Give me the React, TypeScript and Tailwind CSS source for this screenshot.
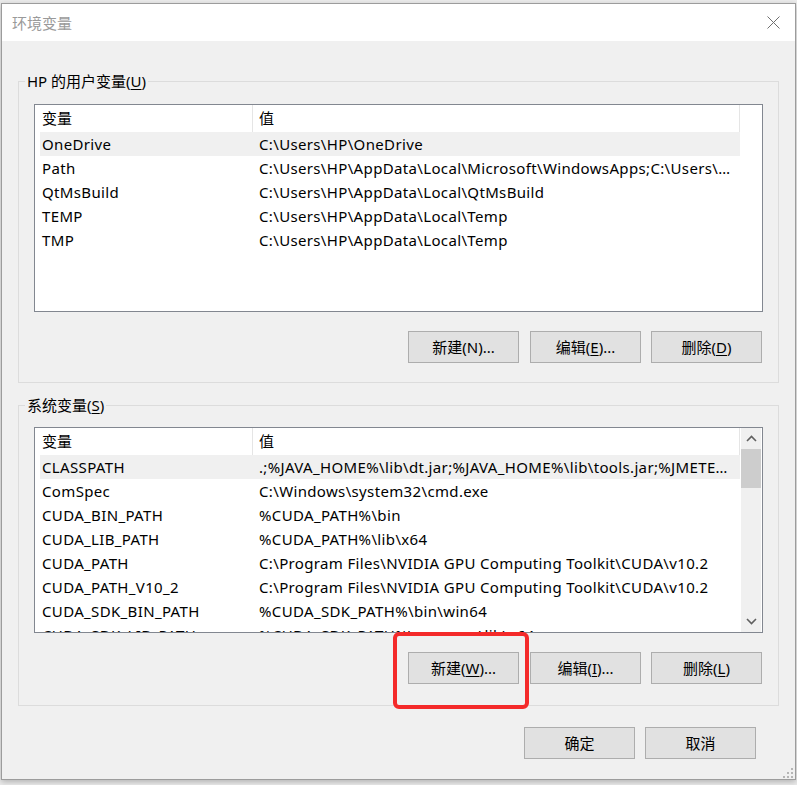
import React from "react";

const FONT = "font-['Noto_Sans','Noto_Sans_CJK_SC',sans-serif]";

type Row = { name: string; value: string; selected?: boolean };

const userRows: Row[] = [
  { name: "OneDrive", value: "C:\\Users\\HP\\OneDrive", selected: true },
  {
    name: "Path",
    value:
      "C:\\Users\\HP\\AppData\\Local\\Microsoft\\WindowsApps;C:\\Users\\HP\\AppData\\Local\\Programs\\Microsoft VS Code\\bin",
  },
  { name: "QtMsBuild", value: "C:\\Users\\HP\\AppData\\Local\\QtMsBuild" },
  { name: "TEMP", value: "C:\\Users\\HP\\AppData\\Local\\Temp" },
  { name: "TMP", value: "C:\\Users\\HP\\AppData\\Local\\Temp" },
];

const sysRows: Row[] = [
  {
    name: "CLASSPATH",
    value:
      ".;%JAVA_HOME%\\lib\\dt.jar;%JAVA_HOME%\\lib\\tools.jar;%JMETER_HOME%\\lib\\ext\\ApacheJMeter_core.jar;",
    selected: true,
  },
  { name: "ComSpec", value: "C:\\Windows\\system32\\cmd.exe" },
  { name: "CUDA_BIN_PATH", value: "%CUDA_PATH%\\bin" },
  { name: "CUDA_LIB_PATH", value: "%CUDA_PATH%\\lib\\x64" },
  { name: "CUDA_PATH", value: "C:\\Program Files\\NVIDIA GPU Computing Toolkit\\CUDA\\v10.2" },
  { name: "CUDA_PATH_V10_2", value: "C:\\Program Files\\NVIDIA GPU Computing Toolkit\\CUDA\\v10.2" },
  { name: "CUDA_SDK_BIN_PATH", value: "%CUDA_SDK_PATH%\\bin\\win64" },
  { name: "CUDA_SDK_LIB_PATH", value: "%CUDA_SDK_PATH%\\common\\lib\\x64" },
];

function Header() {
  return (
    <div className="flex h-[27px] w-[705px] shrink-0 text-[15px] leading-[27px] text-black">
      <div className="w-[218px] border-r border-[#e5e5e5] pl-[7px]">变量</div>
      <div className="w-[487px] border-r border-[#e5e5e5] pl-[6px]">值</div>
    </div>
  );
}

function Rows({ rows }: { rows: Row[] }) {
  return (
    <div className="flex flex-col">
      {rows.map((r) => (
        <div
          key={r.name}
          className={
            "ml-[5px] flex h-[24px] w-[700px] shrink-0 text-[15px] leading-[24px] tracking-[0.35px] text-black " +
            (r.selected ? "bg-[#f0f0f0]" : "")
          }
        >
          <div className="w-[213px] shrink-0 truncate pl-[2px]">{r.name}</div>
          <div className="w-[487px] shrink-0 truncate pl-[6px] pr-[6px]">{r.value}</div>
        </div>
      ))}
    </div>
  );
}

function Btn({ children, className = "" }: { children: React.ReactNode; className?: string }) {
  return (
    <button
      className={
        "flex h-[32px] w-[111px] items-center justify-center border border-[#adadad] bg-[#e1e1e1] text-[15px] text-black " +
        className
      }
    >
      {children}
    </button>
  );
}

function U({ children }: { children: React.ReactNode }) {
  return <span className="underline underline-offset-[2px]">{children}</span>;
}

function Chevron({ up }: { up?: boolean }) {
  return (
    <svg width="11" height="7" viewBox="0 0 11 7">
      <path
        d={up ? "M1 6 L5.5 1.5 L10 6" : "M1 1 L5.5 5.5 L10 1"}
        fill="none"
        stroke="#606060"
        strokeWidth="1.6"
      />
    </svg>
  );
}

export default function App() {
  return (
    <div className={"relative h-[785px] w-[797px] overflow-hidden bg-[#ececec] " + FONT}>
      <div className="relative ml-[1px] mt-[3px] flex h-[777px] w-[795px] flex-col border border-[#9c9c9c] bg-[#f0f0f0] shadow-[0_2px_6px_rgba(0,0,0,0.25)]">
        {/* title bar */}
        <div className="flex h-[37px] shrink-0 items-center justify-between bg-white pl-[10px] pr-[15px]">
          <span className="text-[15px] leading-[20px] text-[#9a9a9a]">环境变量</span>
          <svg width="13" height="13" viewBox="0 0 13 13">
            <path d="M0.5 0.5 L12.5 12.5 M12.5 0.5 L0.5 12.5" stroke="#6f6f6f" strokeWidth="1" />
          </svg>
        </div>

        {/* user variables */}
        <fieldset className="ml-[16px] mt-[30px] w-[761px] border border-[#dcdcdc]">
          <legend className="ml-[6px] px-[2px] text-[15px] leading-[20px] text-black">
            HP 的用户变量(<U>U</U>)
          </legend>
          <div className="mx-[15px] pt-[13px] pb-[19px]">
            <div className="h-[208px] overflow-hidden border border-[#828790] bg-white">
              <Header />
              <Rows rows={userRows} />
            </div>
            <div className="mt-[19px] flex justify-end pr-[1px]">
              <Btn>新建(N)...</Btn>
              <Btn className="ml-[11px]">
                编辑(<U>E</U>)...
              </Btn>
              <Btn className="ml-[10px]">
                删除(<U>D</U>)
              </Btn>
            </div>
          </div>
        </fieldset>

        {/* system variables */}
        <fieldset className="ml-[16px] mt-[12px] w-[761px] border border-[#dcdcdc]">
          <legend className="ml-[6px] px-[2px] text-[15px] leading-[20px] text-black">
            系统变量(<U>S</U>)
          </legend>
          <div className="mx-[15px] pt-[12px] pb-[21px]">
            <div className="flex h-[206px] overflow-hidden border border-[#828790] bg-white">
              <div className="flex w-[706px] flex-col overflow-hidden">
                <Header />
                <Rows rows={sysRows} />
              </div>
              <div className="mr-[1px] flex w-[20px] flex-col bg-[#f0f0f0]">
                <div className="flex h-[21px] items-center justify-center">
                  <Chevron up />
                </div>
                <div className="h-[39px] bg-[#cdcdcd]" />
                <div className="flex-1" />
                <div className="flex h-[21px] items-center justify-center">
                  <Chevron />
                </div>
              </div>
            </div>
            <div className="mt-[19px] flex justify-end pr-[1px]">
              <Btn>
                新建(<U>W</U>)...
              </Btn>
              <Btn className="ml-[11px]">
                编辑(<U>I</U>)...
              </Btn>
              <Btn className="ml-[10px]">
                删除(<U>L</U>)
              </Btn>
            </div>
          </div>
        </fieldset>

        {/* OK / Cancel */}
        <div className="mt-[21px] flex justify-end gap-[10px] pr-[39px]">
          <Btn>确定</Btn>
          <Btn>取消</Btn>
        </div>

        {/* resize grip */}
        <svg className="absolute bottom-[1px] right-[2px]" width="12" height="12" viewBox="0 0 12 12">
          <rect x="10" y="2" width="2" height="2" fill="#b5b5b5" />
          <rect x="6" y="6" width="2" height="2" fill="#b5b5b5" />
          <rect x="10" y="6" width="2" height="2" fill="#b5b5b5" />
          <rect x="2" y="10" width="2" height="2" fill="#b5b5b5" />
          <rect x="6" y="10" width="2" height="2" fill="#b5b5b5" />
          <rect x="10" y="10" width="2" height="2" fill="#b5b5b5" />
        </svg>

        {/* red annotation box */}
        <div className="pointer-events-none absolute left-[391px] top-[628px] h-[77px] w-[136px] rounded-[6px] border-[4px] border-[#f42a2a]" />
      </div>
    </div>
  );
}
